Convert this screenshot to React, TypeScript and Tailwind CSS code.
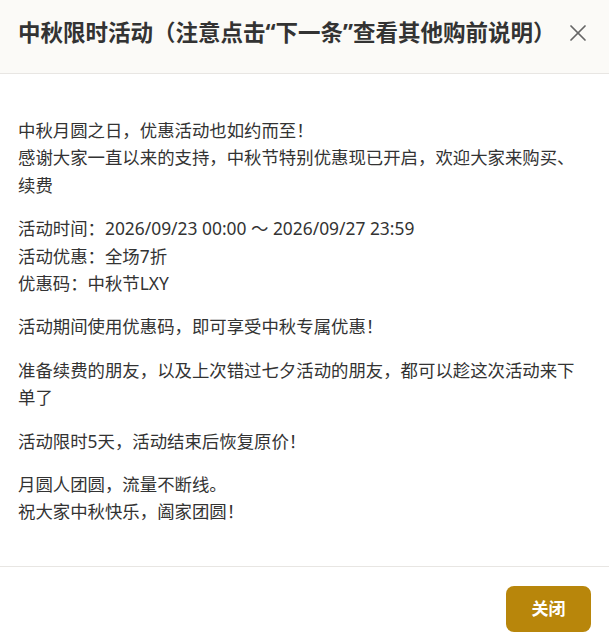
import { X } from 'lucide-react';

const paragraphs: string[][] = [
  ['中秋月圆之日，优惠活动也如约而至！', '感谢大家一直以来的支持，中秋节特别优惠现已开启，欢迎大家来购买、续费'],
  ['活动时间：2026/09/23 00:00 ～ 2026/09/27 23:59', '活动优惠：全场7折', '优惠码：中秋节LXY'],
  ['活动期间使用优惠码，即可享受中秋专属优惠！'],
  ['准备续费的朋友，以及上次错过七夕活动的朋友，都可以趁这次活动来下单了'],
  ['活动限时5天，活动结束后恢复原价！'],
  ['月圆人团圆，流量不断线。', '祝大家中秋快乐，阖家团圆！'],
];

export default function App() {
  return (
    <div
      className="w-[609px] h-[640px] overflow-hidden bg-white text-[#333]"
      style={{ fontFamily: '"Noto Sans", "Noto Sans CJK SC", sans-serif' }}
    >
      {/* Header */}
      <header className="h-[74px] bg-[#fbfaf7] border-b border-[#e8e6e3] flex items-start justify-between pl-[18px] pr-[17px] pt-[16px]">
        <h1 className="text-[22.5px] leading-[34px] font-bold">
          中秋限时活动（注意点击“下一条”查看其他购前说明）
        </h1>
        <button className="mt-[3px] text-[#666]">
          <X size={28} strokeWidth={1.5} />
        </button>
      </header>

      {/* Body */}
      <main className="px-[18px] pt-[43px] pb-[40px] text-[17.4px] leading-[27.4px]">
        {paragraphs.map((lines, i) => (
          <p key={i} className={i < paragraphs.length - 1 ? 'mb-[16px]' : ''}>
            {lines.map((line, j) => (
              <span key={j} className="block">
                {line}
              </span>
            ))}
          </p>
        ))}
      </main>

      {/* Footer */}
      <footer className="border-t border-[#e8e6e3] flex justify-end pt-[19px] pr-[18px]">
        <button className="w-[85px] h-[46px] rounded-[8px] bg-[#b8860b] text-white text-[17px] font-bold">
          关闭
        </button>
      </footer>
    </div>
  );
}
